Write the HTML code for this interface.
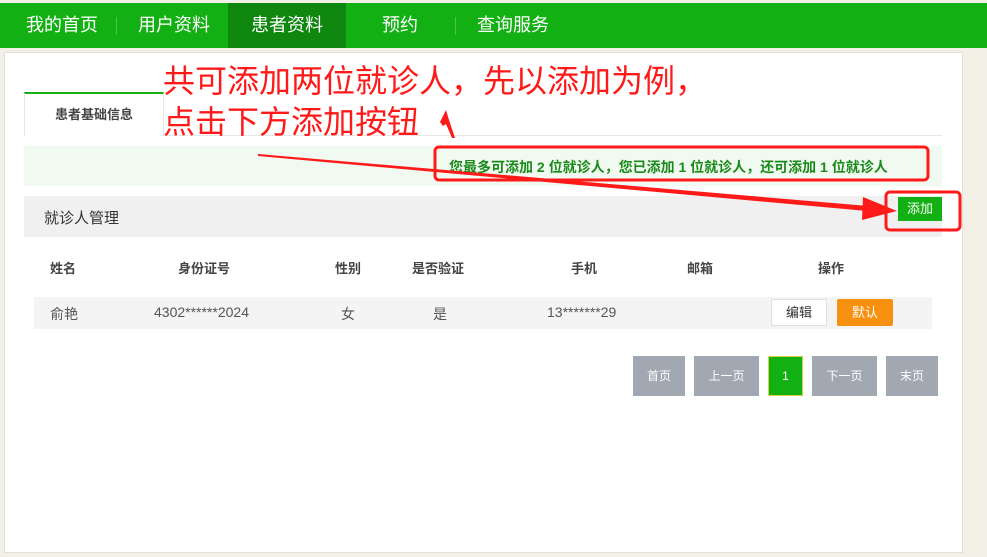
<!DOCTYPE html>
<html><head><meta charset="utf-8"><style>
*{margin:0;padding:0;box-sizing:border-box}
body{width:987px;height:557px;background:#f3f0e8;font-family:"Liberation Sans","Noto Sans CJK SC",sans-serif;position:relative;overflow:hidden}
.nav{position:absolute;left:0;top:3px;width:987px;height:45px;background:#12b012}
.nav span{position:absolute;top:0;height:45px;line-height:45px;color:#fff;font-size:18px;text-align:center}
.sep{position:absolute;top:14px;width:1px;height:18px;background:#4cc44c}
.panel{position:absolute;left:4px;top:52px;width:959px;height:501px;background:#fff;border:1px solid #e4e0d8}
.a{position:absolute}
.red{color:#ff1a1a;font-size:32px;line-height:40px}
</style></head><body>
<div class="nav">
<span style="left:22px;width:80px">我的首页</span>
<div class="sep" style="left:116px"></div>
<span style="left:134px;width:80px">用户资料</span>
<span style="left:228px;width:118px;background:#0f870f">患者资料</span>
<span style="left:370px;width:60px">预约</span>
<div class="sep" style="left:455px"></div>
<span style="left:473px;width:80px">查询服务</span>
</div>
<div class="panel"></div>
<div class="a" style="left:24px;top:92px;width:140px;height:44px;border-top:2px solid #12b012;border-left:1px solid #e8e8e8;border-right:1px solid #e8e8e8;background:#fff;font-size:13px;color:#444;font-weight:bold;text-align:center;line-height:42px">患者基础信息</div>
<div class="a" style="left:164px;top:135px;width:778px;height:1px;background:#e6e6e6"></div>
<div class="a" style="left:24px;top:146px;width:918px;height:40px;background:#f1faf1"></div>
<div class="a" style="left:449px;top:157px;font-size:14px;font-weight:bold;color:#1a8a1a">您最多可添加 2 位就诊人，您已添加 1 位就诊人，还可添加 1 位就诊人</div>
<div class="a" style="left:24px;top:196px;width:918px;height:41px;background:#f0f0f0"></div>
<div class="a" style="left:44px;top:207px;font-size:15px;color:#333">就诊人管理</div>
<div class="a" style="left:898px;top:197px;width:44px;height:24px;background:#12b012;color:#fff;font-size:13px;text-align:center;line-height:24px">添加</div>
<div class="a" style="top:258px;left:0;width:987px;font-size:13px;color:#444;font-weight:bold">
<span class="a" style="left:50px">姓名</span><span class="a" style="left:178px">身份证号</span><span class="a" style="left:335px">性别</span><span class="a" style="left:412px">是否验证</span><span class="a" style="left:571px">手机</span><span class="a" style="left:687px">邮箱</span><span class="a" style="left:818px">操作</span></div>
<div class="a" style="left:34px;top:297px;width:898px;height:32px;background:#f4f4f4"></div>
<div class="a" style="top:304px;left:0;width:987px;font-size:14px;color:#555">
<span class="a" style="left:50px">俞艳</span><span class="a" style="left:154px">4302******2024</span><span class="a" style="left:341px">女</span><span class="a" style="left:433px">是</span><span class="a" style="left:547px">13*******29</span></div>
<div class="a" style="left:771px;top:299px;width:56px;height:27px;border:1px solid #ddd;background:#fff;font-size:13px;color:#333;text-align:center;line-height:25px;border-radius:2px">编辑</div>
<div class="a" style="left:837px;top:299px;width:56px;height:27px;background:#f7900f;font-size:13px;color:#fff;text-align:center;line-height:27px;border-radius:2px">默认</div>
<div class="a" style="left:633px;top:356px;width:52px;height:40px;background:#a2a8b1;color:#fff;font-size:12px;text-align:center;line-height:40px">首页</div>
<div class="a" style="left:694px;top:356px;width:65px;height:40px;background:#a2a8b1;color:#fff;font-size:12px;text-align:center;line-height:40px">上一页</div>
<div class="a" style="left:768px;top:356px;width:35px;height:40px;background:#12b012;border:1px solid #d8d040;color:#fff;font-size:12px;text-align:center;line-height:38px">1</div>
<div class="a" style="left:812px;top:356px;width:65px;height:40px;background:#a2a8b1;color:#fff;font-size:12px;text-align:center;line-height:40px">下一页</div>
<div class="a" style="left:886px;top:356px;width:52px;height:40px;background:#a2a8b1;color:#fff;font-size:12px;text-align:center;line-height:40px">末页</div>
<div class="a red" style="left:163px;top:61px">共可添加两位就诊人，先以添加为例，</div>
<div class="a red" style="left:163px;top:102px">点击下方添加按钮</div>
<svg class="a" style="left:0;top:0" width="987" height="557">
<rect x="435" y="147" width="493" height="33" rx="4" fill="none" stroke="#ff1a1a" stroke-width="3"/>
<rect x="886" y="192" width="74" height="38" rx="4" fill="none" stroke="#ff1a1a" stroke-width="3"/>
<polygon points="258,154 880,207 878,212 258,156" fill="#ff1a1a"/>
<polygon points="863,197 897,211 862,220" fill="#ff1a1a"/>
<polygon points="440,122 446,110 449,120 455,138 452,138 446,124 443,126" fill="#ff1a1a"/>
</svg>
</body></html>
